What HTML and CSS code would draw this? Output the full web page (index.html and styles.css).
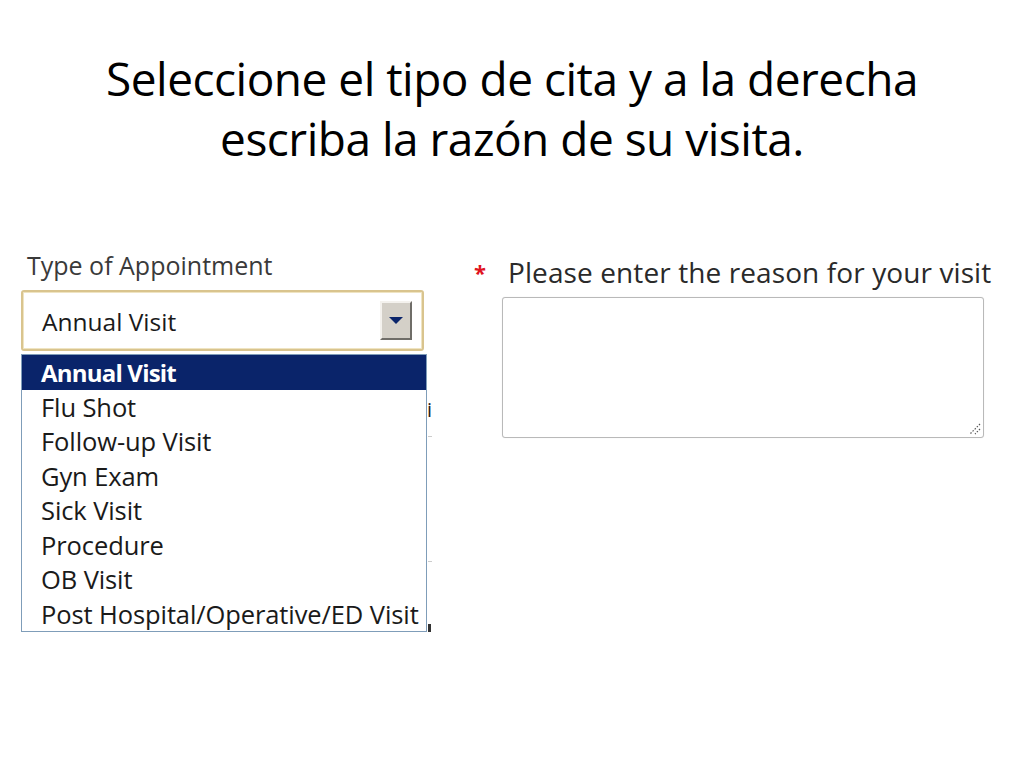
FILE: index.html
```html
<!DOCTYPE html>
<html lang="es">
<head>
<meta charset="utf-8">
<title>Tipo de cita</title>
<link rel="stylesheet" href="styles.css">
</head>
<body>
<h1 class="title">Seleccione el tipo de cita y a la derecha<br>escriba la razón de su visita.</h1>
<div class="form">
  <div class="left">
    <div class="label">Type of Appointment</div>
    <div class="select">
      <span class="select-value">Annual Visit</span>
      <span class="select-btn"><svg width="14" height="8" viewBox="0 0 14 8"><polygon points="0,0 14,0 7,7" fill="#0a246a"/></svg></span>
    </div>
    <div class="list-wrap">
      <ul class="list">
        <li class="sel">Annual Visit</li>
        <li>Flu Shot</li>
        <li>Follow-up Visit</li>
        <li>Gyn Exam</li>
        <li>Sick Visit</li>
        <li>Procedure</li>
        <li>OB Visit</li>
        <li>Post Hospital/Operative/ED Visit</li>
      </ul>
      <span class="frag frag-i">i</span>
      <span class="frag frag-line1"></span>
      <span class="frag frag-line2"></span>
      <span class="frag frag-end"></span>
    </div>
  </div>
  <div class="right">
    <div class="req-row">
      <span class="star">*</span>
      <span class="label2">Please enter the reason for your visit</span>
    </div>
    <div class="textarea">
      <svg class="grip" width="14" height="14" viewBox="0 0 14 14"><path d="M13 3 L3 13 M13 8 L8 13" stroke="#555" stroke-width="1.2" stroke-dasharray="1.5 1.5" fill="none"/></svg>
    </div>
  </div>
</div>
</body>
</html>
```

FILE: styles.css
```css
html, body {
  margin: 0;
  padding: 0;
  background: #ffffff;
}
body {
  width: 1024px;
  height: 768px;
  overflow: hidden;
}
.title {
  margin: 0;
  padding-top: 48px;
  font-family: "Open Sans", "Liberation Sans", sans-serif;
  font-weight: 400;
  font-size: 46px;
  line-height: 60px;
  color: #000;
  text-align: center;
  letter-spacing: -0.5px;
}
.form {
  display: flex;
  padding-left: 21px;
  margin-top: 82px;
  font-family: "Open Sans", "Liberation Sans", sans-serif;
}
.left {
  width: 406px;
  flex: none;
}
.label {
  font-size: 25px;
  line-height: 30px;
  color: #3a3a3a;
  padding-left: 6px;
  height: 40px;
}
.select {
  box-sizing: border-box;
  height: 61px;
  width: 403px;
  border: 2px solid #d9c48e;
  border-radius: 3px;
  box-shadow: inset 0 0 0 1px #efe4c2;
  display: flex;
  align-items: center;
  justify-content: space-between;
  padding: 0 10px 0 19px;
  background: #fff;
}
.select-value {
  font-size: 24.5px;
  color: #1a1a1a;
  padding-top: 2px;
}
.select-btn {
  box-sizing: border-box;
  width: 32px;
  height: 39px;
  background: #d4d0c8;
  border-top: 2px solid #f4f2ee;
  border-left: 2px solid #f4f2ee;
  border-right: 2px solid #6f6d68;
  border-bottom: 2px solid #6f6d68;
  display: flex;
  align-items: center;
  justify-content: center;
}
.list-wrap {
  position: relative;
  margin-top: 3px;
}
.list {
  list-style: none;
  margin: 0;
  padding: 0;
  box-sizing: border-box;
  width: 406px;
  border: 1px solid #7f9db9;
  background: #fff;
}
.list li {
  height: 34.5px;
  line-height: 35px;
  font-size: 25.5px;
  color: #1a1a1a;
  padding-left: 19px;
  white-space: nowrap;
  letter-spacing: -0.1px;
}
.list li.sel {
  background: #0a246a;
  color: #fff;
  font-weight: 700;
  font-size: 24px;
  letter-spacing: -0.8px;
}
.frag {
  position: absolute;
  display: block;
}
.frag-i {
  left: 406px;
  top: 42px;
  font-size: 20px;
  line-height: 28px;
  color: #222;
}
.frag-line1 {
  left: 407px;
  top: 82px;
  width: 4px;
  height: 1px;
  background: #ccc;
}
.frag-line2 {
  left: 407px;
  top: 207px;
  width: 4px;
  height: 1px;
  background: #ccc;
}
.frag-end {
  left: 407px;
  top: 270px;
  width: 3px;
  height: 8px;
  background: #333;
}
.right {
  margin-left: 45px;
  flex: none;
}
.req-row {
  display: flex;
  align-items: flex-start;
  height: 42px;
  padding-top: 5px;
}
.star {
  color: #e0141e;
  font-size: 22px;
  line-height: 34px;
  width: 36px;
  box-sizing: border-box;
  padding-left: 2px;
  font-weight: 700;
}
.label2 {
  font-size: 28px;
  line-height: 34px;
  color: #2a2a2a;
  letter-spacing: 0.1px;
}
.textarea {
  margin-left: 30px;
  box-sizing: border-box;
  width: 482px;
  height: 141px;
  border: 1px solid #b9b9b9;
  border-radius: 3px;
  box-shadow: 0 0 1px #ddd;
  position: relative;
  background: #fff;
}
.grip {
  position: absolute;
  right: 2px;
  bottom: 2px;
}
```
